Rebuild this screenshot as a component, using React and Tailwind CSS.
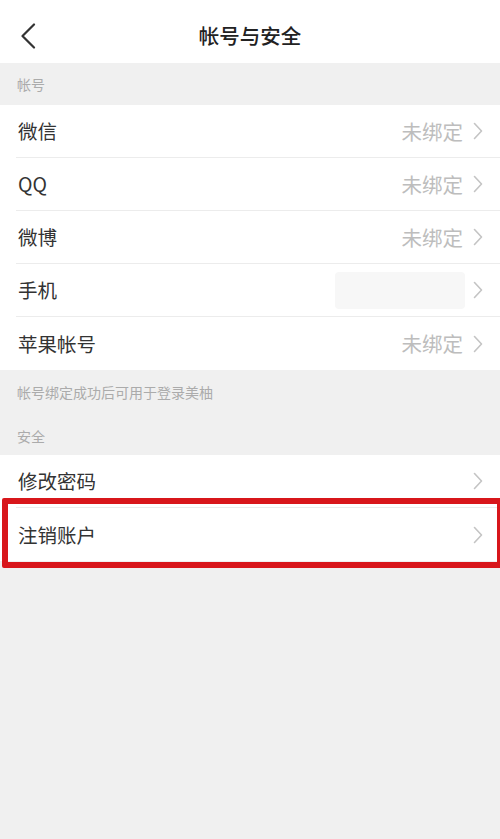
import React from 'react';

const font = { fontFamily: '"Noto Sans CJK SC", "Noto Sans", sans-serif' };

function Chevron() {
  return (
    <svg width="10" height="18" viewBox="0 0 10 18" fill="none" className="ml-[10px] shrink-0">
      <polyline points="1.5,1.5 8.5,9 1.5,16.5" stroke="#c4c4c4" strokeWidth="1.6" strokeLinecap="round" strokeLinejoin="round" />
    </svg>
  );
}

function Row({ label, value, blurred, last }) {
  return (
    <div className="flex h-[53px] bg-white pl-[16px]">
      <div className={`flex flex-1 items-center pl-[2px] pr-[17px] ${last ? '' : 'border-b border-[#ececec]'}`}>
        <span className="flex-1 text-[19.5px] text-[#333333]">{label}</span>
        {blurred && <div className="mr-[-2px] h-[37px] w-[130px] rounded-[4px] bg-[#f7f7f7]" />}
        {value && <span className="text-[20.5px] text-[#bdbdbd]">{value}</span>}
        <Chevron />
      </div>
    </div>
  );
}

export default function App() {
  return (
    <div className="relative h-[839px] w-[500px] overflow-hidden bg-[#f0f0f0]" style={font}>
      {/* Header */}
      <div className="relative flex h-[63px] items-center justify-center bg-white">
        <svg width="16" height="26" viewBox="0 0 16 26" fill="none" className="absolute left-[20px] top-[23px]">
          <polyline points="14,1.5 2.5,13 14,24.5" stroke="#333333" strokeWidth="2.2" strokeLinecap="round" strokeLinejoin="round" />
        </svg>
        <span className="mt-[7px] text-[20.5px] font-medium text-[#222222]">帐号与安全</span>
      </div>

      {/* 帐号 */}
      <div className="flex h-[42px] items-center px-[17px] text-[14px] text-[#ababab]">帐号</div>
      <div>
        <Row label="微信" value="未绑定" />
        <Row label="QQ" value="未绑定" />
        <Row label="微博" value="未绑定" />
        <Row label="手机" blurred />
        <Row label="苹果帐号" value="未绑定" last />
      </div>
      <div className="flex h-[45px] items-center px-[17px] text-[14px] text-[#ababab]">帐号绑定成功后可用于登录美柚</div>

      {/* 安全 */}
      <div className="flex h-[40px] items-center px-[17px] pt-[2px] text-[14px] text-[#ababab]">安全</div>
      <div>
        <Row label="修改密码" />
        <Row label="注销账户" last />
      </div>

      {/* highlight box */}
      <div className="absolute left-[2px] top-[498px] h-[70px] w-[501px] rounded-[2px] border-[6px] border-[#d8161b]" />
    </div>
  );
}
